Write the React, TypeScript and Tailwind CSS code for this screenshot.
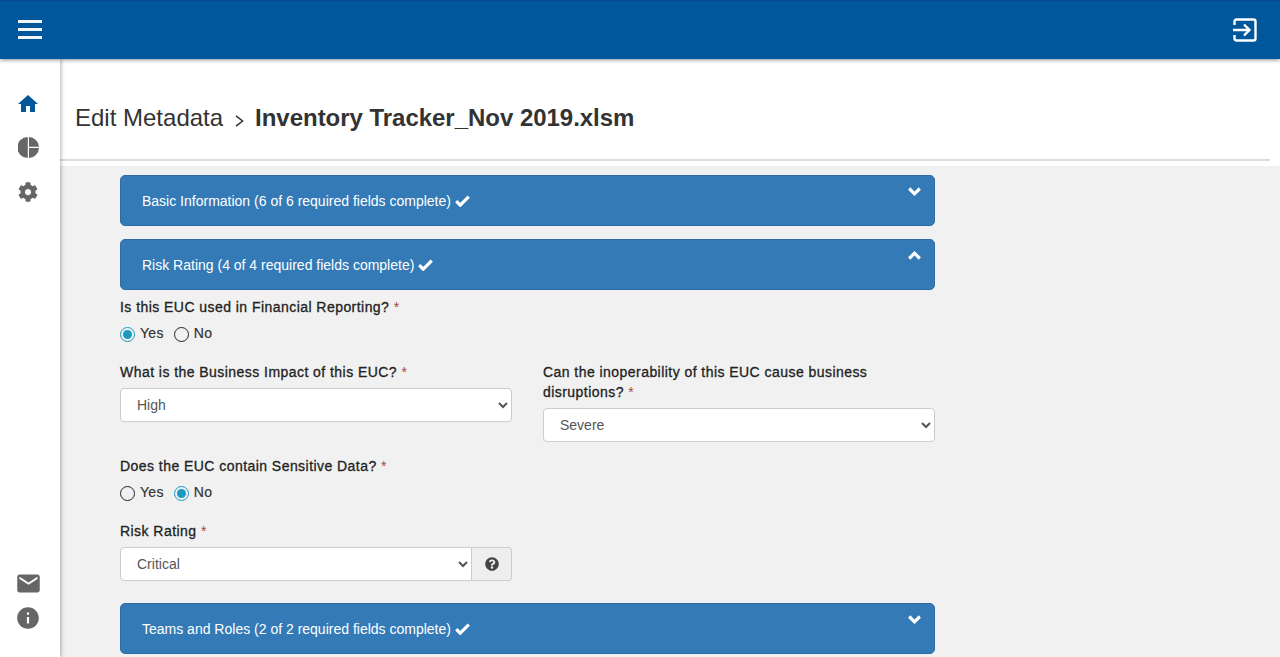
import { FaCog, FaQuestionCircle } from "react-icons/fa";
import { MdEmail, MdHome, MdInfo } from "react-icons/md";

const Panel = ({ title, open, className }: { title: string; open?: boolean; className?: string }) => (
  <div className={`h-[51px] bg-[#337ab7] border border-[#2e6da4] rounded-[5px] pl-[21px] pr-[13px] flex justify-between text-white ${className ?? ""}`}>
    <div className="flex items-center gap-[4px] text-[14px] pt-[1px]">
      {title}
      <svg width="15" height="12" viewBox="0 0 15 12" fill="none" stroke="white" strokeWidth="3.2">
        <path d="M1.2 6.2l4 4L13.8 1.6" />
      </svg>
    </div>
    <div className="pt-[11px]">
      <svg width="13" height="9" viewBox="0 0 13 9" fill="none" stroke="white" strokeWidth="3.2">
        <path d={open ? "M1.2 7.5L6.5 2.2l5.3 5.3" : "M1.2 1.5l5.3 5.3 5.3-5.3"} />
      </svg>
    </div>
  </div>
)

const Label = ({ text, firstLine, className }: { text: string; firstLine?: string; className?: string }) => (
  <div className={`text-[14px] leading-[20px] text-[#222] tracking-[0.45px] [-webkit-text-stroke:0.3px] ${className ?? ""}`}>
    {firstLine && <div>{firstLine}</div>}
    <div>
      {text} <span className="text-[#a94442] [-webkit-text-stroke:0px]">*</span>
    </div>
  </div>
)

const Radio = ({ text, on }: { text: string; on?: boolean }) => (
  <label className="flex items-center gap-[5px]">
    <span className={`w-[15px] h-[15px] mt-[2px] rounded-full border flex items-center justify-center ${on ? "border-[#1b9ac4]" : "border-[#222]"}`}>
      {on && <span className="w-[9px] h-[9px] rounded-full bg-[#1b9ac4]" />}
    </span>
    <span className="text-[14px] leading-[20px] text-[#333] tracking-[0.3px] [-webkit-text-stroke:0.2px]">{text}</span>
  </label>
)

const Radios = ({ yes, className }: { yes: boolean; className?: string }) => (
  <div className={`flex gap-[10px] ${className ?? ""}`}>
    <Radio text="Yes" on={yes} />
    <Radio text="No" on={!yes} />
  </div>
)

const Select = ({ value, className }: { value: string; className?: string }) => (
  <select
    defaultValue={value}
    className={`h-[34px] w-full bg-white border border-[#ccc] rounded-[4px] pl-[12px] pr-[8px] text-[14px] text-[#555] ${className ?? ""}`}
  >
    <option>{value}</option>
  </select>
)

export default function App() {
  return (
    <div className="h-[657px] overflow-hidden flex flex-col bg-white font-['Liberation_Sans',sans-serif]">
      {/* topbar */}
      <div className="h-[59px] shrink-0 bg-[#01579b] border-t border-[#0a4a94] flex items-center justify-between pl-[18px] pr-[23px] shadow-[0_1px_4px_rgba(0,0,0,0.45)] relative z-20">
        <div className="w-[24px] flex flex-col gap-[5px] -mt-[1px]">
          <div className="h-[3px] bg-[#f2f6fa]" />
          <div className="h-[3px] bg-[#f2f6fa]" />
          <div className="h-[3px] bg-[#f2f6fa]" />
        </div>
        <svg width="24" height="24" viewBox="0 0 24 24" fill="none" stroke="white" strokeWidth="2.4">
          <path d="M1.5 7V3.5a2 2 0 0 1 2-2h17a2 2 0 0 1 2 2v17a2 2 0 0 1-2 2h-17a2 2 0 0 1-2-2V17" />
          <path d="M0 12h15M11 6.5l5.5 5.5-5.5 5.5" />
        </svg>
      </div>

      <div className="flex-1 flex min-h-0">
        {/* sidebar */}
        <div className="w-[60px] shrink-0 bg-white shadow-[1px_0_4px_rgba(0,0,0,0.3)] relative z-10 flex flex-col justify-between items-center pt-[33px] pb-[26px] pr-[4px] text-[#666]">
          <div className="flex flex-col items-center">
            <MdHome size={24} className="text-[#01579b]" />
            <svg width="21" height="21" viewBox="0 0 21 21" fill="#666" className="mt-[21px]">
              <path d="M9.8 0v21A10.5 10.5 0 0 1 9.8 0Z" />
              <path d="M11 0a10.5 10.5 0 0 1 10 9.8H11Z" />
              <path d="M11 11h10a10.5 10.5 0 0 1-10 10Z" />
            </svg>
            <FaCog className="text-[20px] mt-[24px]" />
          </div>
          <div className="flex flex-col items-center gap-[8px]">
            <MdEmail size={27} />
            <MdInfo size={26} />
          </div>
        </div>

        <div className="flex-1 min-w-0 flex flex-col">
          {/* page title */}
          <div className="h-[107px] shrink-0 bg-white pl-[15px] pr-[10px] flex flex-col">
            <div className="flex-1 flex items-center pt-[18px] text-[24px] text-[#333]">
              <span>Edit Metadata</span>
              <svg width="9" height="12" viewBox="0 0 9 12" fill="none" stroke="#333" strokeWidth="1.5" className="ml-[12px] mr-[11px] mt-[5px]">
                <path d="M1 .8L7.6 6 1 11.2" />
              </svg>
              <span className="font-bold tracking-[-0.03px]">Inventory Tracker_Nov 2019.xlsm</span>
            </div>
            <div className="h-[2px] bg-[#ddd] -ml-[15px] mb-[5px]" />
          </div>

          {/* form */}
          <div className="flex-1 bg-[#f1f1f1] pl-[60px] pt-[9px]">
            <div className="w-[815px]">
              <Panel title="Basic Information (6 of 6 required fields complete)" />
              <Panel title="Risk Rating (4 of 4 required fields complete)" open className="mt-[13px]" />
              <Label text="Is this EUC used in Financial Reporting?" className="mt-[7px]" />
              <Radios yes className="mt-[6px]" />
              <div className="mt-[19px] grid grid-cols-2 gap-x-[31px]">
                <div>
                  <Label text="What is the Business Impact of this EUC?" />
                  <Select value="High" className="mt-[6px]" />
                </div>
                <div>
                  <Label firstLine="Can the inoperability of this EUC cause business" text="disruptions?" />
                  <Select value="Severe" className="mt-[6px]" />
                </div>
              </div>
              <Label text="Does the EUC contain Sensitive Data?" className="mt-[14px]" />
              <Radios yes={false} className="mt-[6px]" />
              <Label text="Risk Rating" className="mt-[19px]" />
              <div className="mt-[6px] w-[392px] flex">
                <Select value="Critical" className="rounded-r-none" />
                <div className="w-[40px] h-[34px] shrink-0 bg-[#eee] border border-l-0 border-[#ccc] rounded-r-[4px] flex items-center justify-center text-[#444] text-[14px]">
                  <FaQuestionCircle />
                </div>
              </div>
              <Panel title="Teams and Roles (2 of 2 required fields complete)" className="mt-[22px]" />
            </div>
          </div>
        </div>
      </div>
    </div>
  )
}
